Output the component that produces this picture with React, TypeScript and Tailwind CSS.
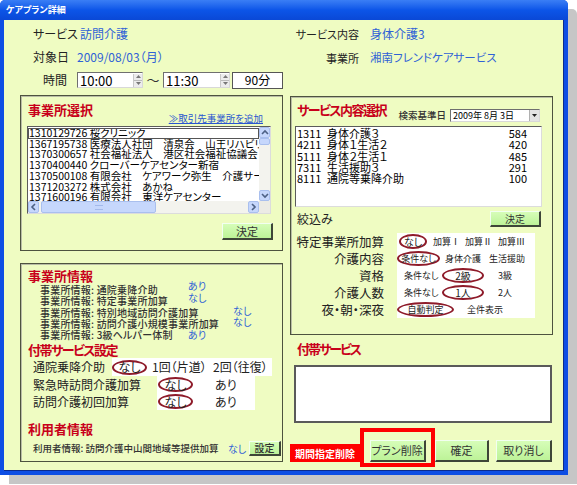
import React from "react"

const BLUE = "text-[#2f62d6]"

function GreenBtn({ label, className = "" }: { label: string; className?: string }) {
  return (
    <div
      className={`shrink-0 whitespace-nowrap flex items-center justify-center bg-gradient-to-b from-[#d6fdb8] to-[#bdf398] border-t border-l border-t-[#f2fff0] border-l-[#f2fff0] border-r-2 border-b-2 border-r-[#3e4638] border-b-[#3e4638] text-[#333] ${className}`}
    >
      {label}
    </div>
  )
}

function Circ({ children, className = "" }: { children: React.ReactNode; className?: string }) {
  return (
    <span className={`shrink-0 whitespace-nowrap inline-flex items-center justify-center h-[15px] leading-none border-2 border-[#8e1b2a] rounded-[50%] ${className}`}>
      {children}
    </span>
  )
}

function Arrow({ dir }: { dir: "up" | "down" | "left" | "right" }) {
  const d = {
    up: "M1 5 L4 2 L7 5",
    down: "M1 2 L4 5 L7 2",
    left: "M5 1 L2 4 L5 7",
    right: "M2 1 L5 4 L2 7",
  }[dir]
  return (
    <svg width="8" height="8" viewBox="0 0 8 8">
      <path d={d} fill="none" stroke="#4d6185" strokeWidth="1.6" />
    </svg>
  )
}

function Spin() {
  return (
    <div className="w-[9px] h-[13px] flex flex-col bg-[#ececec] border-l border-[#c8c8c8]">
      <div className="flex-1 flex items-center justify-center">
        <svg width="5" height="3" viewBox="0 0 5 3"><path d="M0 3 L2.5 0 L5 3Z" fill="#777" /></svg>
      </div>
      <div className="h-px bg-[#bbb]" />
      <div className="flex-1 flex items-center justify-center">
        <svg width="5" height="3" viewBox="0 0 5 3"><path d="M0 0 L2.5 3 L5 0Z" fill="#777" /></svg>
      </div>
    </div>
  )
}

function TimeBox({ value, className }: { value: string; className: string }) {
  return (
    <div className={`h-[16px] bg-white border border-t-[#6f6f6f] border-l-[#6f6f6f] border-r-[#d8d8d8] border-b-[#d8d8d8] flex items-center ${className}`}>
      <span className="flex-1 pl-[2px] text-[13px] leading-none">{value}</span>
      <Spin />
    </div>
  )
}

const offices = [
  "1310129726 桜クリニック",
  "1367195738 医療法人社団　清泉会　山王リハビリ訪問看護",
  "1370300657 社会福祉法人　港区社会福祉協議会",
  "1370400440 クローバーケアセンター新宿",
  "1370500108 有限会社　ケアワーク弥生　介護サービス",
  "1371203272 株式会社　あかね",
  "1371600196 有限会社　東洋ケアセンター",
]

const services = [
  ["1311", "身体介護３", "584"],
  ["4211", "身体１生活２", "420"],
  ["5111", "身体２生活１", "485"],
  ["7311", "生活援助３", "291"],
  ["8111", "通院等乗降介助", "100"],
]

const officeInfo = [
  ["事業所情報: 通院乗降介助", "あり", "", "-top-[4px]"],
  ["事業所情報: 特定事業所加算", "なし", "", "-top-[3px]"],
  ["事業所情報: 特別地域訪問介護加算", "なし", "ml-[45px]", "-top-[2px]"],
  ["事業所情報: 訪問介護小規模事業所加算", "なし", "ml-[45px]", "-top-[2px]"],
  ["事業所情報: 3級ヘルパー体制", "あり", "", "top-0"],
]

export default function App() {
  return (
    <div className="w-[577px] h-[485px] bg-white text-black font-['Noto_Sans_CJK_JP','Noto_Sans',sans-serif] [font-feature-settings:'palt']">
      <div className="w-[568px] h-[475px] bg-[#0d4ee4] shadow-[9px_9px_0_0_#c6c6c6] rounded-t-[5px] flex flex-col px-[4px] pb-[4px]">
        {/* title bar */}
        <div className="h-[20px] -mx-[4px] px-[6px] rounded-t-[5px] bg-gradient-to-b from-[#3a7ef5] via-[#0c55e8] to-[#0a48d6] flex items-center text-white text-[9px] font-bold">
          ケアプラン詳細
        </div>

        <div className="flex-1 bg-[#effcc2] border-r border-b border-[#0a2b8c] flex pl-[16px] pr-[10px] gap-[7px]">
          {/* left column */}
          <div className="w-[263px] flex flex-col">
            <div className="h-[75px] pt-[6px] text-[12px] whitespace-nowrap">
              <div className="h-[16px] flex items-center">
                <span className="ml-[13px] w-[47px] text-[#222]">サービス</span>
                <span className={BLUE}>訪問介護</span>
              </div>
              <div className="mt-[7px] h-[16px] flex items-center">
                <span className="ml-[13px] w-[44px] text-[#222]">対象日</span>
                <span className={`${BLUE} text-[12px]`}>2009/08/03（月）</span>
              </div>
              <div className="mt-[7px] h-[16px] flex items-center">
                <span className="ml-[23px] w-[34px] text-[#222]">時間</span>
                <TimeBox value="10:00" className="w-[66px]" />
                <span className="w-[20px] text-center text-[13px] text-[#333]">～</span>
                <TimeBox value="11:30" className="w-[67px]" />
                <div className="ml-[2px] w-[51px] h-[17px] bg-white border border-[#555] flex items-center justify-center text-[12px]">
                  90分
                </div>
              </div>
            </div>

            {/* 事業所選択 */}
            <div className="h-[156px] border border-[#4e533f] shadow-[inset_1px_1px_0_#b9bda6] flex flex-col">
              <div className="h-[30px] flex justify-between whitespace-nowrap">
                <span className="pt-[5px] pl-[7px] leading-[18px] text-[13px] font-bold text-[#c8001a]">事業所選択</span>
                <span className="self-end mb-[2px] mr-[19px] leading-[12px] text-[9.5px] text-[#2a55d0] underline">≫取引先事業所を追加</span>
              </div>
              <div className="ml-[6px] w-[244px] h-[88px] bg-white border border-t-[#5b5b5b] border-l-[#5b5b5b] border-r-[#dcdcdc] border-b-[#dcdcdc] flex flex-col">
                <div className="flex flex-1 min-h-0">
                  <div className="flex-1 overflow-hidden whitespace-nowrap text-[10.5px] leading-[10.7px] pt-px">
                    {offices.map((o, i) => (
                      <div key={o} className={`pl-px ${i === 0 ? "outline outline-1 outline-[#555] -outline-offset-1" : ""}`}>
                        {o}
                      </div>
                    ))}
                  </div>
                  <div className="w-[11px] bg-[#f3f3ee] flex flex-col">
                    <div className="h-[11px] bg-[#c6d7fc] border border-[#a9bfee] rounded-[2px] flex items-center justify-center">
                      <Arrow dir="up" />
                    </div>
                    <div className="h-[7px] bg-[#c6d7fc] border border-[#a9bfee] rounded-[2px]" />
                    <div className="flex-1" />
                    <div className="h-[11px] bg-[#c6d7fc] border border-[#a9bfee] rounded-[2px] flex items-center justify-center">
                      <Arrow dir="down" />
                    </div>
                  </div>
                </div>
                <div className="h-[12px] flex bg-[#f3f3ee]">
                  <div className="w-[11px] bg-[#c6d7fc] border border-[#a9bfee] rounded-[2px] flex items-center justify-center">
                    <Arrow dir="left" />
                  </div>
                  <div className="ml-[2px] w-[115px] bg-[#c6d7fc] border border-[#a9bfee] rounded-[2px] flex items-center justify-center">
                    <div className="w-[8px] h-[5px] border-y border-[#a3b9ea]" />
                  </div>
                  <div className="flex-1" />
                  <div className="w-[11px] bg-[#c6d7fc] border border-[#a9bfee] rounded-[2px] flex items-center justify-center">
                    <Arrow dir="right" />
                  </div>
                  <div className="w-[11px] bg-[#ecebe5]" />
                </div>
              </div>
              <GreenBtn label="決定" className="mt-[9px] self-end mr-[9px] w-[51px] h-[17px] text-[11px]" />
            </div>

            {/* 事業所情報 etc */}
            <div className="mt-[12px] h-[199px] border border-[#4e533f] shadow-[inset_1px_1px_0_#b9bda6] flex flex-col">
              <div className="pt-[3px] pl-[7px] leading-[18px] text-[13px] font-bold text-[#c8001a]">事業所情報</div>
              <div className="-mt-[1px] text-[10px] tracking-[0.2px] font-medium text-[#333]">
                {officeInfo.map(([l, v, ml, top]) => (
                  <div key={l} className="h-[11.25px] leading-[11.25px] flex whitespace-nowrap">
                    <span className="ml-[19px] w-[148px] shrink-0">{l}</span>
                    <span className={`relative ${top} ${ml} text-[10px] font-normal ${BLUE}`}>{v}</span>
                  </div>
                ))}
              </div>
              <div className="mt-[2px] pl-[7px] leading-[16px] text-[13px] tracking-[-1.5px] font-bold text-[#c8001a]">付帯サービス設定</div>
              <div className="h-[18px] flex items-center text-[12px] text-[#222] whitespace-nowrap">
                <span className="ml-[12px] w-[79px] shrink-0">通院乗降介助</span>
                <div className="w-[160px] h-full bg-white flex items-center">
                  <Circ className="w-[35px]">なし</Circ>
                  <span className="ml-[5px] w-[61px]">1回（片道）</span>
                  <span>2回（往復）</span>
                </div>
              </div>
              <div className="flex text-[12px] text-[#222] whitespace-nowrap">
                <div className="ml-[12px] w-[124px] shrink-0">
                  <div className="h-[17px] leading-[17px]">緊急時訪問介護加算</div>
                  <div className="h-[17px] leading-[17px]">訪問介護初回加算</div>
                </div>
                <div className="w-[98px] bg-white">
                  <div className="h-[17px] flex items-center">
                    <Circ className="ml-px w-[35px]">なし</Circ>
                    <span className="ml-[22px]">あり</span>
                  </div>
                  <div className="h-[17px] flex items-center">
                    <Circ className="ml-px w-[35px]">なし</Circ>
                    <span className="ml-[22px]">あり</span>
                  </div>
                </div>
              </div>
              <div className="mt-[10px] pl-[7px] leading-[18px] text-[13px] font-bold text-[#c8001a]">利用者情報</div>
              <div className="mt-[2px] h-[16px] flex items-center text-[9.5px] font-medium text-[#333] whitespace-nowrap">
                <span className="ml-[12px] w-[195px] shrink-0">利用者情報: 訪問介護中山間地域等提供加算</span>
                <span className={`w-[20px] shrink-0 text-[10px] font-normal ${BLUE}`}>なし</span>
                <GreenBtn label="設定" className="ml-px w-[32px] h-[15px] text-[10px]" />
              </div>
            </div>
          </div>

          {/* right column */}
          <div className="w-[263px] flex flex-col">
            <div className="h-[76px] pt-[6px] whitespace-nowrap">
              <div className="h-[16px] flex items-center">
                <span className="ml-[2px] w-[67px] text-right text-[11px] text-[#222]">サービス内容</span>
                <span className={`ml-[11px] text-[12px] ${BLUE}`}>身体介護3</span>
              </div>
              <div className="mt-[8px] h-[16px] flex items-center">
                <span className="ml-[2px] w-[67px] text-right text-[11px] text-[#222]">事業所</span>
                <span className={`ml-[11px] text-[11.5px] ${BLUE}`}>湘南フレンドケアサービス</span>
              </div>
            </div>

            {/* サービス内容選択 */}
            <div className="h-[239px] border border-[#4e533f] shadow-[inset_1px_1px_0_#b9bda6] flex flex-col">
              <div className="h-[29px] flex whitespace-nowrap">
                <span className="pt-[4px] pl-[6px] leading-[18px] text-[13px] tracking-[-1.5px] font-bold text-[#c8001a]">サービス内容選択</span>
                <div className="ml-auto mr-[12px] mt-[12px] h-[13px] flex items-center">
                  <span className="text-[9.5px] font-medium text-[#333] mr-[4px]">検索基準日</span>
                  <div className="w-[90px] h-[13px] bg-white border border-t-[#6f6f6f] border-l-[#6f6f6f] border-r-[#d8d8d8] border-b-[#d8d8d8] flex items-center">
                    <span className="flex-1 pl-[2px] text-[9px] leading-none">2009年 8月 3日</span>
                    <div className="w-[10px] h-full bg-[#e4e4e4] border-l border-[#b0b0b0] flex items-center justify-center">
                      <svg width="5" height="3" viewBox="0 0 5 3"><path d="M0 0 L2.5 3 L5 0Z" fill="#222" /></svg>
                    </div>
                  </div>
                </div>
              </div>
              <div className="ml-[4px] w-[247px] h-[81px] bg-white border border-t-[#5b5b5b] border-l-[#5b5b5b] border-r-[#dcdcdc] border-b-[#dcdcdc] pt-px text-[11px] leading-[11.25px]">
                {services.map(([c, n, p]) => (
                  <div key={c} className="flex pl-px pr-[14px]">
                    <span className="w-[30px]">{c}</span>
                    <span className="flex-1">{n}</span>
                    <span>{p}</span>
                  </div>
                ))}
              </div>
              <div className="mt-[4px] h-[16px] flex items-center justify-between">
                <span className="pl-[6px] text-[12px] text-[#222]">絞込み</span>
                <GreenBtn label="決定" className="mr-[11px] w-[51px] h-[16px] text-[10px]" />
              </div>
              <div className="mt-[6px] flex whitespace-nowrap">
                <div className="w-[93px] text-right text-[12.5px] text-[#222]">
                  {["特定事業所加算", "介護内容", "資格", "介護人数", "夜・朝・深夜"].map((l) => (
                    <div key={l} className="h-[17px] leading-[17px]">{l}</div>
                  ))}
                </div>
                <div className="ml-[13px] w-[138px] bg-white text-[9px] text-[#222]">
                  <div className="h-[17px] flex items-center">
                    <Circ className="ml-[2px] w-[28px] text-[10px]">なし</Circ>
                    <span className="ml-[6px] w-[32px]">加算Ⅰ</span>
                    <span className="w-[33px]">加算Ⅱ</span>
                    <span>加算Ⅲ</span>
                  </div>
                  <div className="h-[17px] flex items-center">
                    <Circ className="w-[43px]">条件なし</Circ>
                    <span className="ml-[5px] w-[44px]">身体介護</span>
                    <span>生活援助</span>
                  </div>
                  <div className="h-[17px] flex items-center">
                    <span className="ml-[7px] w-[38px]">条件なし</span>
                    <Circ className="w-[42px] text-[10px]">2級</Circ>
                    <span className="ml-[14px]">3級</span>
                  </div>
                  <div className="h-[17px] flex items-center">
                    <span className="ml-[7px] w-[38px]">条件なし</span>
                    <Circ className="w-[42px] text-[10px]">1人</Circ>
                    <span className="ml-[14px]">2人</span>
                  </div>
                  <div className="h-[17px] flex items-center">
                    <Circ className="w-[57px]">自動判定</Circ>
                    <span className="ml-[13px]">全件表示</span>
                  </div>
                </div>
              </div>
            </div>

            <div className="mt-[5px] pl-[7px] leading-[18px] text-[13px] tracking-[-2px] font-bold text-[#c8001a]">付帯サービス</div>
            <div className="mt-[7px] ml-[4px] w-[258px] h-[58px] bg-white border-2 border-[#5a5a5a]" />

            <div className="mt-[5px] h-[39px] flex items-end text-[11px] whitespace-nowrap">
              <div className="mb-[5px] w-[70px] h-[18px] bg-[#ff0000] text-white font-bold text-[10px] flex items-center justify-center">
                期間指定削除
              </div>
              <div className="w-[75px] h-[39px] border-4 border-[#ff0000] flex items-end justify-center pb-px">
                <GreenBtn label="プラン削除" className="w-[56px] h-[22px]" />
              </div>
              <GreenBtn label="確定" className="mb-[5px] w-[54px] h-[22px]" />
              <GreenBtn label="取り消し" className="mb-[5px] ml-[7px] w-[56px] h-[22px]" />
            </div>
          </div>
        </div>
      </div>
    </div>
  )
}
